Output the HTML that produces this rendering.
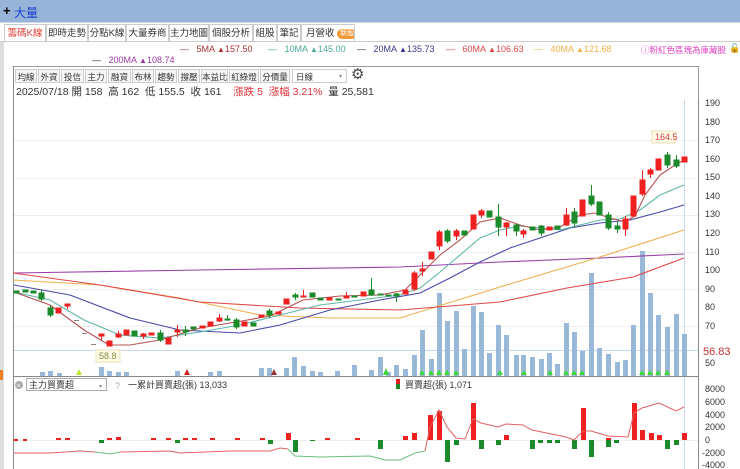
<!DOCTYPE html>
<html><head><meta charset="utf-8">
<style>
body{margin:0;width:740px;height:469px;overflow:hidden;background:#fff;font-family:"Liberation Sans","Noto Sans CJK TC",sans-serif;position:relative}
.abs{position:absolute;white-space:nowrap}
.top{left:0;top:0;width:740px;height:22px;background:#97b4d8}
.tab{position:absolute;top:24px;height:17px;font-size:9.5px;line-height:17px;color:#333;border:1px solid #ccc;border-bottom:none;background:#fff;text-align:center;white-space:nowrap;overflow:hidden;box-sizing:border-box}
.lg{font-size:9px;top:44px}
.tb{position:absolute;top:69px;height:14px;font-size:8.5px;line-height:14px;color:#333;border:1px solid #ccc;background:#f6f6f6;text-align:center;white-space:nowrap;overflow:hidden;box-sizing:border-box}
</style></head><body>
<div class="abs top"></div>
<div class="abs" style="left:3px;top:3px;font-size:13px;font-weight:bold;color:#000">+</div>
<div class="abs" style="left:14px;top:4px;font-size:12px;color:#1a3fd0">大量</div>
<div class="abs" style="left:0;top:22px;width:740px;height:1px;background:#c8d8ea"></div>
<div class="tab" style="left:4px;width:42px;color:#e0403a">籌碼K線</div>
<div class="tab" style="left:46px;width:42px">即時走勢</div>
<div class="tab" style="left:88px;width:38px">分點K線</div>
<div class="tab" style="left:126px;width:43px">大量券商</div>
<div class="tab" style="left:169px;width:40px">主力地圖</div>
<div class="tab" style="left:209px;width:44px">個股分析</div>
<div class="tab" style="left:253px;width:24px">組股</div>
<div class="tab" style="left:277px;width:24px">筆記</div>
<div class="tab" style="left:301px;width:54px;text-align:left;padding-left:4px">月營收 <span style="display:inline-block;background:#f29a3a;color:#fff;font-size:7px;line-height:10px;border-radius:5px;padding:0 3px;vertical-align:1px">新版</span></div>
<div class="abs" style="left:0;top:41px;width:740px;height:1px;background:#ccc"></div>
<div class="abs" style="left:0;top:42px;width:4px;height:427px;background:#ddd"></div>
<div class="abs" style="left:0;top:370px;width:3px;height:10px;background:#f08020"></div>

<div class="abs lg" style="left:180px;color:#a33">—&nbsp;&nbsp;&nbsp;5MA <span style="font-size:8px">▲</span>157.50</div>
<div class="abs lg" style="left:268px;color:#4aaa9a">—&nbsp;&nbsp;&nbsp;10MA <span style="font-size:8px">▲</span>145.00</div>
<div class="abs lg" style="left:357px;color:#3a3a8a"><span style="color:#333">—</span>&nbsp;&nbsp;&nbsp;20MA <span style="font-size:8px">▲</span>135.73</div>
<div class="abs lg" style="left:446px;color:#e04848">—&nbsp;&nbsp;&nbsp;60MA <span style="font-size:8px">▲</span>106.63</div>
<div class="abs lg" style="left:534px;color:#f0b048">—&nbsp;&nbsp;&nbsp;40MA <span style="font-size:8px">▲</span>121.68</div>
<div class="abs lg" style="left:641px;color:#e040c0;font-size:8.5px">ⓘ粉紅色區塊為庫藏股</div>
<div class="abs" style="left:729px;top:43px;font-size:9px">🔓</div>
<div class="abs lg" style="left:92px;top:55px;color:#9a3aa0"><span style="color:#333">—</span>&nbsp;&nbsp;&nbsp;200MA <span style="font-size:8px">▲</span>108.74</div>

<div class="abs" style="left:13px;top:66px;width:686px;height:1px;background:#999"></div>
<div class="abs" style="left:13px;top:66px;width:1px;height:403px;background:#888"></div>
<div class="abs" style="left:698px;top:66px;width:1px;height:34px;background:#999"></div>
<div class="tb" style="left:15px;width:22px">均線</div>
<div class="tb" style="left:38px;width:22px">外資</div>
<div class="tb" style="left:61px;width:23px">投信</div>
<div class="tb" style="left:85px;width:22px">主力</div>
<div class="tb" style="left:108px;width:23px">融資</div>
<div class="tb" style="left:132px;width:22px">布林</div>
<div class="tb" style="left:155px;width:22px">趨勢</div>
<div class="tb" style="left:178px;width:22px">撐壓</div>
<div class="tb" style="left:201px;width:27px">本益比</div>
<div class="tb" style="left:229px;width:30px">紅綠燈</div>
<div class="tb" style="left:260px;width:30px">分價量</div>
<div class="tb" style="left:292px;width:55px;background:#fff;text-align:left;padding-left:3px">日線<span style="position:absolute;right:4px;font-size:6px;color:#888">▾</span></div>
<div class="abs" style="left:351px;top:65px;font-size:15px;color:#444">⚙</div>
<div class="abs" style="left:16px;top:84px;font-size:10.5px;color:#333">2025/07/18 開 158&nbsp; 高 162&nbsp; 低 155.5&nbsp; 收 161&nbsp;&nbsp;&nbsp; <span style="color:#e0303a">漲跌 5&nbsp; 漲幅 3.21%</span>&nbsp; 量 25,581</div>

<svg class="abs" style="left:0;top:0" width="740" height="469">
<g stroke="#eee" stroke-width="1">
<line x1="14" y1="140.5" x2="698" y2="140.5"/><line x1="14" y1="178.5" x2="698" y2="178.5"/><line x1="14" y1="215.5" x2="698" y2="215.5"/><line x1="14" y1="252.5" x2="698" y2="252.5"/><line x1="14" y1="289.5" x2="698" y2="289.5"/><line x1="14" y1="326.5" x2="698" y2="326.5"/>
</g>
<line x1="14" y1="350.5" x2="698" y2="350.5" stroke="#c8d8ea"/>
<line x1="684.5" y1="100" x2="684.5" y2="469" stroke="#c8d8f0"/>
<line x1="698.5" y1="100" x2="698.5" y2="469" stroke="#888"/>
<line x1="14" y1="376.5" x2="698" y2="376.5" stroke="#888"/>
<g font-size="9" fill="#333" font-family="Liberation Sans">
<text x="705" y="106">190</text><text x="705" y="125">180</text><text x="705" y="143">170</text><text x="705" y="162">160</text><text x="705" y="180">150</text><text x="705" y="199">140</text><text x="705" y="217">130</text><text x="705" y="236">120</text><text x="705" y="255">110</text><text x="705" y="273">100</text><text x="705" y="292">90</text><text x="705" y="310">80</text><text x="705" y="329">70</text><text x="705" y="366">50</text>
<text x="705" y="392">8000</text><text x="705" y="405">6000</text><text x="705" y="418">4000</text><text x="705" y="430">2000</text><text x="705" y="443">0</text><text x="702" y="456">-2000</text><text x="702" y="468">-4000</text>
</g>
<text x="703" y="355" font-size="11" fill="#c03030" font-family="Liberation Sans">56.83</text>
<rect x="652" y="131" width="23" height="12" fill="#fffbe8" stroke="#e8e0b0"/>
<text x="655" y="140" font-size="9" fill="#e04040" font-family="Liberation Sans">164.5</text>
<rect x="96" y="350" width="24" height="12" fill="#fffbe8" stroke="#e8e0b0"/>
<text x="99" y="359" font-size="9" fill="#8a8a40" font-family="Liberation Sans">58.8</text>

<g fill="#9ab8d8">
<rect x="40" y="372" width="5" height="4"/><rect x="48" y="371" width="5" height="5"/><rect x="57" y="373" width="5" height="3"/><rect x="99" y="367" width="5" height="9"/><rect x="107" y="371" width="5" height="5"/><rect x="116" y="372" width="5" height="4"/><rect x="124" y="372" width="5" height="4"/><rect x="175" y="371" width="5" height="5"/><rect x="208" y="372" width="5" height="4"/><rect x="217" y="371" width="5" height="5"/><rect x="259" y="368" width="5" height="8"/><rect x="267" y="368" width="5" height="8"/><rect x="284" y="368" width="5" height="8"/><rect x="292" y="357" width="5" height="19"/><rect x="301" y="366" width="5" height="10"/><rect x="310" y="371" width="5" height="5"/><rect x="318" y="372" width="5" height="4"/><rect x="335" y="371" width="5" height="5"/><rect x="352" y="365" width="5" height="11"/><rect x="369" y="370" width="5" height="6"/><rect x="378" y="357" width="5" height="19"/><rect x="386" y="372" width="5" height="4"/><rect x="394" y="365" width="5" height="11"/>
<rect x="403" y="369" width="5" height="7"/><rect x="412" y="355" width="5" height="21"/><rect x="420" y="330" width="5" height="46"/><rect x="429" y="359" width="5" height="17"/><rect x="437" y="293" width="5" height="83"/><rect x="445" y="321" width="5" height="55"/><rect x="454" y="311" width="5" height="65"/><rect x="462" y="349" width="5" height="27"/><rect x="471" y="306" width="5" height="70"/><rect x="479" y="312" width="5" height="64"/><rect x="487" y="353" width="5" height="23"/><rect x="496" y="325" width="5" height="51"/><rect x="504" y="335" width="5" height="41"/><rect x="514" y="355" width="5" height="21"/><rect x="521" y="355" width="5" height="21"/><rect x="530" y="357" width="5" height="19"/><rect x="539" y="359" width="5" height="17"/><rect x="547" y="353" width="5" height="23"/><rect x="555" y="364" width="5" height="12"/><rect x="564" y="323" width="5" height="53"/><rect x="572" y="332" width="5" height="44"/><rect x="580" y="351" width="5" height="25"/><rect x="589" y="273" width="5" height="103"/><rect x="597" y="348" width="5" height="28"/><rect x="606" y="354" width="5" height="22"/><rect x="615" y="362" width="5" height="14"/><rect x="623" y="360" width="5" height="16"/><rect x="631" y="325" width="5" height="51"/><rect x="640" y="251" width="5" height="125"/><rect x="648" y="293" width="5" height="83"/><rect x="656" y="315" width="5" height="61"/><rect x="665" y="327" width="5" height="49"/><rect x="674" y="314" width="5" height="62"/><rect x="682" y="334" width="5" height="42"/>
</g>
<g fill="#3ad83a">
<polygon points="76,375 79,369 82,375" fill="#b8e830"/><polygon points="271,375 274,369 277,375" fill="#9b3030"/><polygon points="184,375 187,369 190,375" fill="#d02020"/><polygon points="383,375 386,368 389,375"/>
<polygon points="419,375 422,370 425,375"/><polygon points="428,375 431,370 434,375"/><polygon points="436,375 439,370 442,375"/><polygon points="444,375 447,370 450,375"/><polygon points="453,375 456,370 459,375"/><polygon points="497,375 500,370 503,375"/><polygon points="521,375 524,370 527,375"/><polygon points="547,375 550,370 553,375"/><polygon points="563,375 566,370 569,375"/><polygon points="571,375 574,370 577,375"/><polygon points="579,375 582,370 585,375"/><polygon points="639,375 642,370 645,375"/><polygon points="647,375 650,370 653,375"/><polygon points="655,375 658,370 661,375"/><polygon points="664,375 667,370 670,375"/>
</g>

<g fill="none" stroke-width="1.1">
<polyline stroke="#9a40a8" points="13,273 200,270 400,267 500,262 600,258 684,254"/>
<polyline stroke="#f0b050" points="13,280 100,285 180,298 260,315 330,318 400,318 500,287 600,257 684,230"/>
<polyline stroke="#e04848" points="13,273 100,285 200,302 300,308 400,310 500,302 567,288 633,277 684,258"/>
<polyline stroke="#4848a8" points="14,285 70,295 130,318 180,330 240,333 280,325 330,310 380,300 420,293 450,278 480,262 510,248 540,238 570,228 600,223 630,220 660,212 684,205"/>
<polyline stroke="#5cb8a8" points="14,292 50,300 84,320 120,335 160,338 200,332 240,325 280,315 320,305 360,300 400,295 420,288 440,272 460,255 480,238 500,230 520,226 540,228 560,230 580,225 600,220 620,219 640,210 660,195 684,185"/>
<polyline stroke="#b85050" points="14,292 50,305 84,330 109,345 130,345 160,340 200,328 236,322 270,316 303,300 340,296 380,295 405,290 420,275 440,255 460,240 480,222 500,218 520,225 540,230 560,227 580,215 595,213 610,218 625,222 635,216 645,195 660,175 675,165 684,160"/>
</g>

<g stroke-width="1">
<g fill="#1a8a2a" stroke="#1a8a2a">
<rect x="14" y="291" width="5" height="2"/><rect x="23" y="290" width="5" height="2"/><rect x="31" y="291" width="5" height="2"/>
<line x1="41.5" y1="290" x2="41.5" y2="301"/><rect x="39" y="293" width="5" height="6"/>
<line x1="50.5" y1="305" x2="50.5" y2="317"/><rect x="48" y="308" width="5" height="7"/>
<rect x="132" y="331" width="5" height="5"/><line x1="160.5" y1="330" x2="160.5" y2="342"/><rect x="158" y="333" width="5" height="7"/>
<rect x="183" y="330" width="5" height="2"/><line x1="185.5" y1="326" x2="185.5" y2="336"/><rect x="191" y="327" width="5" height="2"/>
<line x1="227.5" y1="315" x2="227.5" y2="321"/><rect x="225" y="319" width="5" height="1"/>
<line x1="236.5" y1="318" x2="236.5" y2="329"/><rect x="234" y="320" width="5" height="7"/><rect x="251" y="323" width="5" height="3"/>
<line x1="269.5" y1="309" x2="269.5" y2="318"/><rect x="267" y="311" width="5" height="4"/>
<line x1="295.5" y1="293" x2="295.5" y2="300"/><rect x="293" y="295" width="5" height="2"/>
<rect x="310" y="293" width="5" height="4"/><rect x="318" y="298" width="5" height="2"/><rect x="336" y="299" width="5" height="1"/><rect x="352" y="296" width="5" height="1"/>
<line x1="371.5" y1="278" x2="371.5" y2="296"/><rect x="369" y="290" width="5" height="5"/><rect x="378" y="294" width="5" height="1"/><rect x="386" y="295" width="5" height="1"/><line x1="396.5" y1="293" x2="396.5" y2="302"/><rect x="394" y="294" width="5" height="2"/>
<line x1="447.5" y1="229" x2="447.5" y2="243"/><rect x="445" y="231" width="5" height="10"/><rect x="462" y="231" width="5" height="4"/>
<rect x="487" y="211" width="5" height="6"/><line x1="498.5" y1="204" x2="498.5" y2="236"/><rect x="496" y="217" width="5" height="10"/>
<line x1="516.5" y1="224" x2="516.5" y2="236"/><rect x="514" y="225" width="5" height="6"/><rect x="530" y="227" width="5" height="3"/><line x1="541.5" y1="225" x2="541.5" y2="236"/><rect x="539" y="226" width="5" height="7"/>
<rect x="555" y="226" width="5" height="3"/><line x1="574.5" y1="208" x2="574.5" y2="227"/><rect x="572" y="212" width="5" height="11"/>
<line x1="591.5" y1="185" x2="591.5" y2="206"/><rect x="589" y="196" width="5" height="8"/><rect x="597" y="202" width="5" height="13"/>
<line x1="608.5" y1="212" x2="608.5" y2="230"/><rect x="606" y="215" width="5" height="13"/><line x1="617.5" y1="222" x2="617.5" y2="233"/><rect x="615" y="226" width="5" height="3"/>
<line x1="667.5" y1="152" x2="667.5" y2="168"/><rect x="665" y="155" width="5" height="10"/><line x1="676.5" y1="155" x2="676.5" y2="168"/><rect x="674" y="160" width="5" height="6"/>
</g>
<g fill="#ee2020" stroke="#ee2020">
<rect x="56" y="308" width="5" height="5"/><line x1="67.5" y1="304" x2="67.5" y2="309"/><rect x="65" y="304" width="5" height="2"/>
<line x1="101.5" y1="334" x2="101.5" y2="340"/><rect x="99" y="334" width="5" height="2"/><rect x="107" y="341" width="5" height="5"/>
<line x1="118.5" y1="331" x2="118.5" y2="338"/><rect x="116" y="334" width="5" height="3"/><rect x="124" y="330" width="5" height="5"/>
<line x1="143.5" y1="333" x2="143.5" y2="339"/><rect x="141" y="334" width="5" height="2"/><rect x="149" y="333" width="5" height="2"/>
<rect x="166" y="338" width="5" height="6"/><line x1="177.5" y1="325" x2="177.5" y2="337"/><rect x="175" y="330" width="5" height="2"/>
<rect x="200" y="326" width="5" height="2"/><rect x="208" y="322" width="5" height="4"/><line x1="219.5" y1="314" x2="219.5" y2="322"/><rect x="217" y="318" width="5" height="3"/>
<rect x="242" y="322" width="5" height="4"/><rect x="259" y="315" width="5" height="2"/><rect x="276" y="312" width="5" height="2"/><rect x="284" y="299" width="5" height="5"/>
<line x1="303.5" y1="290" x2="303.5" y2="297"/><rect x="301" y="296" width="5" height="1"/><rect x="327" y="298" width="5" height="2"/>
<line x1="346.5" y1="292" x2="346.5" y2="298"/><rect x="344" y="296" width="5" height="2"/><rect x="361" y="292" width="5" height="4"/>
<rect x="403" y="290" width="5" height="4"/><line x1="414.5" y1="271" x2="414.5" y2="291"/><rect x="412" y="273" width="5" height="16"/>
<line x1="422.5" y1="262" x2="422.5" y2="276"/><rect x="420" y="269" width="5" height="2"/><rect x="429" y="252" width="5" height="7"/>
<line x1="439.5" y1="230" x2="439.5" y2="250"/><rect x="437" y="232" width="5" height="14"/><line x1="456.5" y1="229" x2="456.5" y2="240"/><rect x="454" y="231" width="5" height="5"/>
<rect x="471" y="215" width="5" height="14"/><line x1="481.5" y1="209" x2="481.5" y2="218"/><rect x="479" y="211" width="5" height="4"/>
<line x1="506.5" y1="222" x2="506.5" y2="236"/><rect x="504" y="223" width="5" height="4"/><line x1="523.5" y1="229" x2="523.5" y2="238"/><rect x="521" y="231" width="5" height="3"/>
<rect x="547" y="227" width="5" height="3"/><line x1="566.5" y1="208" x2="566.5" y2="226"/><rect x="564" y="215" width="5" height="10"/>
<rect x="580" y="200" width="5" height="16"/><line x1="625.5" y1="216" x2="625.5" y2="236"/><rect x="623" y="219" width="5" height="10"/>
<rect x="631" y="196" width="5" height="20"/><line x1="642.5" y1="170" x2="642.5" y2="196"/><rect x="640" y="180" width="5" height="14"/>
<line x1="650.5" y1="168" x2="650.5" y2="178"/><rect x="648" y="170" width="5" height="4"/><rect x="656" y="159" width="5" height="11"/><rect x="682" y="157" width="5" height="5"/>
</g>
<g stroke="#888"><line x1="74" y1="320.5" x2="79" y2="320.5"/><line x1="82" y1="333.5" x2="87" y2="333.5"/><line x1="91" y1="344.5" x2="96" y2="344.5"/></g>
</g>

<line x1="14" y1="440.5" x2="698" y2="440.5" stroke="#eee"/>
<circle cx="19" cy="385" r="4" fill="#aaa"/><text x="16.5" y="388" font-size="7" fill="#fff">×</text>
<rect x="26.5" y="378.5" width="80" height="12" fill="#fff" stroke="#aaa"/>
<text x="29" y="388" font-size="9" fill="#333" font-family="Liberation Sans,Noto Sans CJK TC">主力買賣超</text>
<text x="99" y="388" font-size="6" fill="#888">▾</text>
<text x="115" y="389" font-size="9" fill="#aaa">?</text>
<text x="128" y="388" font-size="9" fill="#333" font-family="Liberation Sans,Noto Sans CJK TC">一累計買賣超(張) 13,033</text>
<rect x="396" y="379" width="4" height="5" fill="#e02020"/><rect x="396" y="384" width="4" height="5" fill="#1a8a2a"/>
<text x="405" y="388" font-size="9" fill="#333" font-family="Liberation Sans,Noto Sans CJK TC">買賣超(張) 1,071</text>
<g fill="#ee2020">
<rect x="14" y="439" width="4" height="2"/><rect x="23" y="439" width="4" height="2"/><rect x="56" y="438" width="5" height="2"/><rect x="65" y="438" width="5" height="2"/><rect x="107" y="438" width="5" height="2"/><rect x="116" y="437" width="5" height="3"/><rect x="151" y="438" width="5" height="2"/><rect x="166" y="438" width="5" height="2"/><rect x="183" y="438" width="5" height="2"/><rect x="192" y="438" width="5" height="2"/><rect x="210" y="438" width="5" height="2"/><rect x="235" y="438" width="5" height="2"/><rect x="260" y="438" width="5" height="2"/><rect x="286" y="433" width="5" height="7"/><rect x="325" y="438" width="5" height="2"/><rect x="355" y="438" width="5" height="2"/>
<rect x="403" y="436" width="5" height="4"/><rect x="412" y="433" width="5" height="7"/><rect x="428" y="415" width="5" height="25"/><rect x="437" y="411" width="5" height="29"/><rect x="471" y="403" width="5" height="37"/><rect x="504" y="435" width="5" height="5"/><rect x="581" y="408" width="5" height="32"/><rect x="606" y="438" width="5" height="2"/><rect x="632" y="403" width="5" height="37"/><rect x="640" y="430" width="5" height="10"/><rect x="649" y="433" width="5" height="7"/><rect x="657" y="435" width="5" height="5"/><rect x="682" y="433" width="5" height="7"/>
</g>
<g fill="#1a8a2a">
<rect x="99" y="440" width="5" height="3"/><rect x="175" y="440" width="5" height="3"/><rect x="268" y="440" width="5" height="4"/><rect x="293" y="440" width="5" height="12"/><rect x="310" y="440" width="5" height="1"/><rect x="378" y="440" width="5" height="9"/><rect x="445" y="440" width="5" height="22"/><rect x="454" y="440" width="5" height="5"/><rect x="479" y="440" width="5" height="9"/><rect x="496" y="440" width="5" height="5"/><rect x="530" y="440" width="5" height="9"/><rect x="538" y="440" width="5" height="3"/><rect x="547" y="440" width="5" height="3"/><rect x="555" y="440" width="5" height="3"/><rect x="572" y="440" width="5" height="9"/><rect x="589" y="440" width="5" height="17"/><rect x="606" y="440" width="5" height="7"/><rect x="614" y="440" width="5" height="3"/><rect x="665" y="440" width="5" height="9"/><rect x="674" y="440" width="5" height="5"/>
</g>
<g fill="none" stroke-width="1">
<polyline stroke="#e06060" points="14,453 50,453 80,451 95,452"/>
<polyline stroke="#6cc07a" points="95,452 110,454 120,452"/>
<polyline stroke="#e06060" points="120,452 170,451 180,453 230,451 270,451 280,448 288,449"/>
<polyline stroke="#6cc07a" points="288,449 295,456 320,457 370,456 385,460 400,460 415,453 425,451"/>
<polyline stroke="#e06060" points="425,451 430,427 439,410 447,427 456,438 465,439 473,419 481,423 498,427 506,424 523,425 532,430 566,437 574,440 583,431 591,431 608,436 628,437 634,413 642,408 659,403 676,411 684,407"/>
</g>
</svg>
</body></html>
